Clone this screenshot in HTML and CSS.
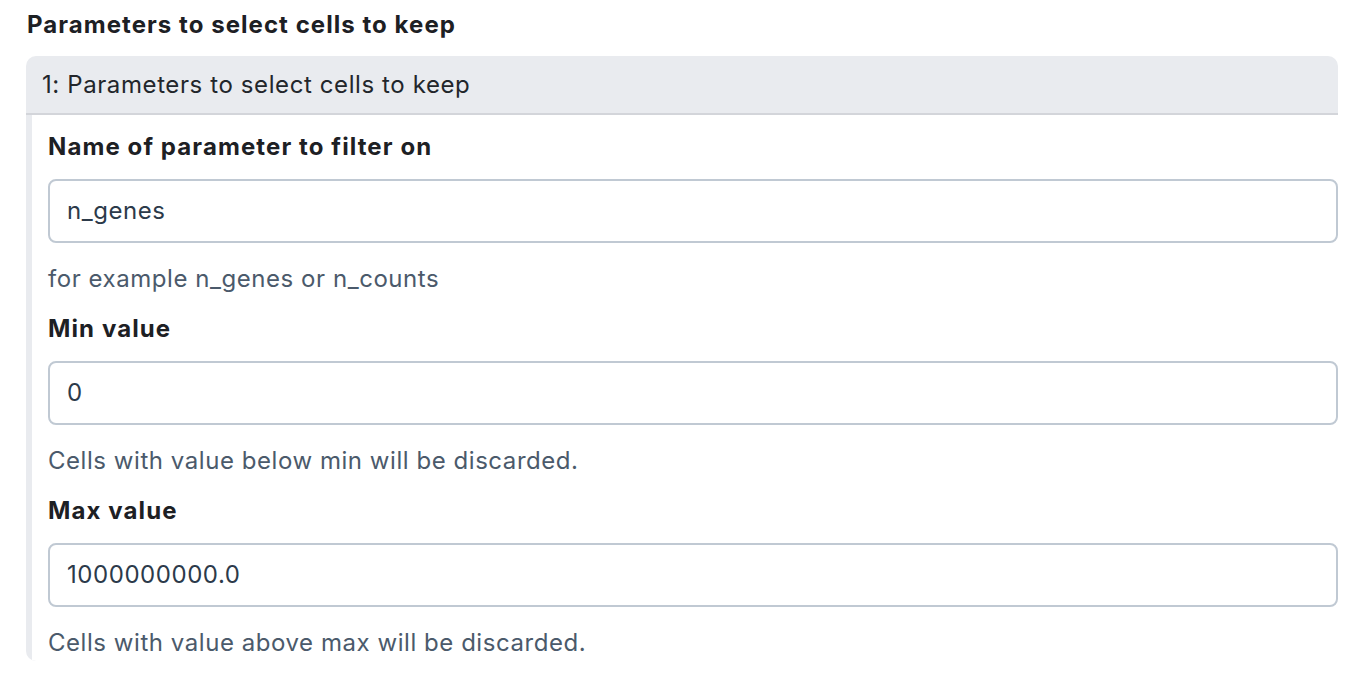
FILE: index.html
```html
<!DOCTYPE html>
<html>
<head>
<meta charset="utf-8">
<link rel="stylesheet" href="styles.css">
</head>
<body>
<div class="page">
  <div class="section-title">Parameters to select cells to keep</div>
  <div class="card">
    <div class="card-header">1: Parameters to select cells to keep</div>
    <div class="card-body">
      <div class="field">
        <div class="label">Name of parameter to filter on</div>
        <div class="input">n_genes</div>
        <div class="help">for example n_genes or n_counts</div>
      </div>
      <div class="field">
        <div class="label">Min value</div>
        <div class="input">0</div>
        <div class="help">Cells with value below min will be discarded.</div>
      </div>
      <div class="field">
        <div class="label">Max value</div>
        <div class="input">1000000000.0</div>
        <div class="help">Cells with value above max will be discarded.</div>
      </div>
    </div>
  </div>
</div>
</body>
</html>
```
FILE: styles.css
```css
html, body {
  margin: 0;
  padding: 0;
  background: #ffffff;
}
body {
  font-family: Inter, "Noto Sans", "Liberation Sans", sans-serif;
  font-size: 24px;
  letter-spacing: 0.55px;
  color: #1d2024;
}
.page {
  padding: 7px 22px 0 26px;
}
.section-title {
  font-weight: 700;
  letter-spacing: 1.05px;
  line-height: 36px;
  margin-bottom: 13px;
  padding-left: 1px;
}
.card {
  background: #e9ebef;
  border-radius: 10px 10px 0 10px;
  overflow: hidden;
}
.card-header {
  height: 57px;
  line-height: 57px;
  padding-left: 16px;
  border-bottom: 2px solid #d3d5da;
  color: #22262b;
  letter-spacing: 0.6px;
}
.card-body {
  margin-left: 6px;
  background: #ffffff;
  padding: 14px 0 0 16px;
}
.field + .field {
  margin-top: 14px;
}
.label {
  font-weight: 700;
  letter-spacing: 1.1px;
  line-height: 36px;
}
.input {
  margin-top: 14px;
  height: 60px;
  line-height: 60px;
  border: 2px solid #c0c9d3;
  border-radius: 8px;
  padding-left: 17px;
  color: #2c3a4a;
}
.help {
  margin-top: 18px;
  line-height: 36px;
  color: #4b5a6b;
}
```
